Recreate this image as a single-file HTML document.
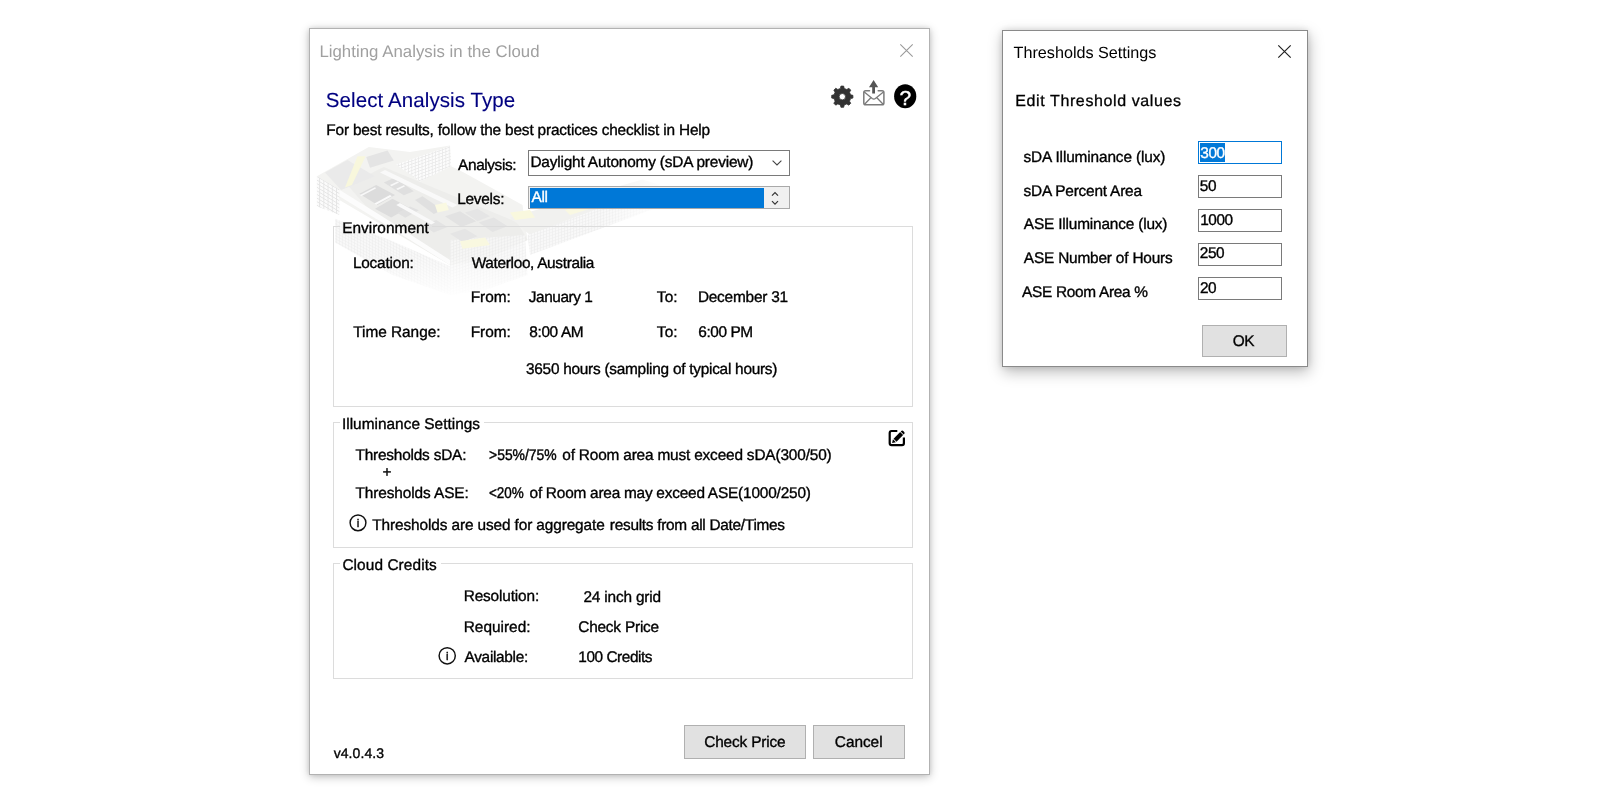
<!DOCTYPE html>
<html lang="en"><head><meta charset="utf-8"><title>Lighting Analysis in the Cloud</title>
<style>
html,body{margin:0;padding:0;background:#fff;}
body{width:1600px;height:800px;position:relative;overflow:hidden;font-family:"Liberation Sans",sans-serif;color:#000;}
.t{position:absolute;white-space:nowrap;line-height:1;text-rendering:geometricPrecision;-webkit-text-stroke:0.35px;}
.abs{position:absolute;box-sizing:border-box;}
.dlg{position:absolute;box-sizing:border-box;background:#fff;}
.grp{position:absolute;box-sizing:border-box;border:1px solid #dcdcdc;}
.btn{position:absolute;box-sizing:border-box;background:#e1e1e1;border:1px solid #b0b0b0;}
.inp{position:absolute;box-sizing:border-box;background:#fff;border:1px solid #7a7a7a;}
.leg{position:absolute;background:#fff;height:5px;}
svg{position:absolute;overflow:visible;}
#stage{position:absolute;left:0;top:0;width:1600px;height:800px;will-change:transform;}
</style></head><body>
<div id="stage">
<div class="dlg" style="left:309px;top:28px;width:621px;height:747px;border:1px solid #b2b2b2;box-shadow:0 0 5px rgba(0,0,0,0.10),0 2px 9px rgba(0,0,0,0.24);"></div>
<svg style="left:0;top:0" width="1600" height="800" viewBox="0 0 1600 800">
<defs>
<pattern id="gridA" width="4.2" height="3.6" patternUnits="userSpaceOnUse" patternTransform="skewY(31)"><rect width="4.2" height="3.6" fill="#e4e4e4"/><rect x="0.9" y="0.9" width="3.3" height="2.7" fill="#fbfbfb"/></pattern>
<pattern id="gridB" width="3.4" height="3.2" patternUnits="userSpaceOnUse" patternTransform="skewY(-20)"><rect width="3.4" height="3.2" fill="#e9e9e9"/><rect x="0.8" y="0.8" width="2.6" height="2.4" fill="#fcfcfc"/></pattern>
<pattern id="gridC" width="3" height="3" patternUnits="userSpaceOnUse" patternTransform="skewY(28)"><rect width="3" height="3" fill="#f7f7f7"/><path d="M0 0H3M0 0V3" stroke="#e9e9e9" stroke-width="0.9"/></pattern>
<pattern id="gridD" width="3" height="3" patternUnits="userSpaceOnUse" patternTransform="skewY(-18)"><rect width="3" height="3" fill="#f8f8f8"/><path d="M0 0H3M0 0V3" stroke="#eaeaea" stroke-width="0.9"/></pattern>
<linearGradient id="fadeR" x1="0" x2="1" y1="0" y2="0"><stop offset="0" stop-color="#fff" stop-opacity="0"/><stop offset="1" stop-color="#fff" stop-opacity="1"/></linearGradient>
<linearGradient id="fadeB" x1="0" x2="0" y1="0" y2="1"><stop offset="0" stop-color="#fff" stop-opacity="0"/><stop offset="1" stop-color="#fff" stop-opacity="1"/></linearGradient>
<filter id="bblur" x="-5%" y="-5%" width="110%" height="110%"><feGaussianBlur stdDeviation="0.45"/></filter>
</defs>
<g filter="url(#bblur)">
<polygon points="316.9,176.2 368.8,146.9 410.0,151.9 450.0,145.6 451.2,166.2 463.8,172.5 522.5,205.0 527.5,240.0 485.0,260.0 450.0,265.0 339.4,200.0" fill="#f3f3f1" />
<polygon points="347.5,185.0 383.8,166.9 420.0,181.9 517.5,222.5 527.5,240.0 485.0,260.0 450.0,265.0 380.0,222.5" fill="#ededeb" />
<polygon points="510.0,217.5 642.5,179.5 660.0,185.0 530.0,235.0" fill="#f1f1ef" />
<polygon points="316.9,176.2 339.4,189.4 339.4,215.0 316.9,206.2" fill="url(#gridA)" />
<polygon points="396.2,164.4 450.0,146.0 451.2,166.2 420.0,181.5" fill="url(#gridB)" />
<polygon points="335.0,218.8 392.5,241.2 450.0,266.2 450.0,295.0 392.5,275.0 335.0,242.5" fill="url(#gridC)" opacity="0.85"/>
<polygon points="450.0,240.0 525.0,235.0 527.5,275.0 485.0,290.0 450.0,295.0" fill="url(#gridD)" opacity="0.8"/>
<polygon points="527.5,235.0 657.5,186.2 657.5,207.5 530.0,255.0" fill="url(#gridD)" opacity="0.9"/>
<polygon points="339.4,189.8 380.0,215.0 450.0,260.0 450.0,265.0 380.0,221.2 339.4,196.2" fill="#fcfcfc" />
<polygon points="366.2,156.9 387.5,150.6 393.8,160.6 370.0,167.8" fill="#e4e4e4" />
<polygon points="325.0,172.5 347.5,160.0 375.0,176.2 341.2,190.0" fill="#eaeaea" />
<polygon points="359.4,193.8 376.2,185.0 395.0,195.0 377.5,205.0" fill="#dcdcdc" />
<polygon points="375.0,208.8 392.5,198.8 408.8,207.5 391.2,217.5" fill="#dddddd" />
<polygon points="383.8,182.5 395.0,177.5 413.8,191.2 403.8,195.2" fill="#dfdfdf" />
<polygon points="415.0,200.0 422.5,196.2 442.5,210.0 433.8,214.0" fill="#e0e0e0" />
<polygon points="397.5,213.1 410.0,206.5 418.8,210.2 405.2,217.8" fill="#e1e1e1" />
<polygon points="445.0,216.2 460.0,211.2 476.2,221.2 461.2,226.9" fill="#e2e2e2" />
<polygon points="465.0,212.5 477.5,208.8 490.0,216.2 477.5,221.2" fill="#e5e5e5" />
<polygon points="478.8,222.5 493.8,217.5 507.5,226.2 492.5,231.9" fill="#e4e4e4" />
<polygon points="422.5,225.0 436.2,220.0 447.5,226.9 433.8,232.5" fill="#e3e3e3" />
<polygon points="450.0,233.8 465.0,228.8 477.5,236.2 462.5,241.9" fill="#e5e5e5" />
<polygon points="374.4,203.5 390.0,195.0 391.9,196.2 376.2,204.8" fill="#fafafa" />
<polygon points="360.0,195.0 375.0,187.2 376.2,188.2 361.2,196.2" fill="#f8f8f8" />
<polygon points="390.0,185.0 397.5,181.5 399.0,182.5 391.5,186.2" fill="#f8f8f8" />
<polygon points="396.2,188.8 403.8,185.2 405.2,186.2 397.8,190.0" fill="#f8f8f8" />
<polygon points="380.0,172.5 385.0,170.0 457.5,205.0 452.5,207.5" fill="#f9f9f9" />
<polygon points="396.2,205.0 400.0,203.1 435.0,222.5 431.2,224.4" fill="#f9f9f9" />
<polygon points="357.5,156.2 365.6,156.2 351.9,185.0 345.0,187.5" fill="#f8f7dc" />
<polygon points="435.0,205.0 446.2,202.5 448.8,210.0 437.5,212.5" fill="#faf9e2" />
<polygon points="460.0,241.2 485.0,237.5 490.0,245.0 462.5,248.8" fill="#f9f8e0" />
<polygon points="510.0,212.5 530.0,210.0 535.0,217.5 515.0,220.0" fill="#f9f8de" />
<polygon points="565.0,210.0 635.0,188.8 637.5,193.8 570.0,215.0" fill="#f9f8e2" />
</g>
<rect x="600" y="170" width="65" height="90" fill="url(#fadeR)"/>
<rect x="312" y="255" width="260" height="45" fill="url(#fadeB)"/>
</svg>

<div class="t" style="left:319.40px;top:43.68px;font-size:16.8px;letter-spacing:0.030px;color:#a0a0a0;-webkit-text-stroke:0;">Lighting Analysis in the Cloud</div>
<svg style="left:900px;top:43.5px" width="13" height="13" viewBox="0 0 13 13"><path d="M0.3 0.3 L12.7 12.7 M12.7 0.3 L0.3 12.7" stroke="#9a9a9a" stroke-width="1.1" fill="none"/></svg>
<div class="t" style="left:325.77px;top:90.55px;font-size:20.5px;letter-spacing:0.096px;color:#000080;-webkit-text-stroke:0.12px;">Select Analysis Type</div>
<div class="t" style="left:326.30px;top:122.96px;font-size:15.4px;letter-spacing:-0.176px;">For best results, follow the best practices checklist in Help</div>
<svg style="left:0;top:0" width="1600" height="800" viewBox="0 0 1600 800">
<path d="M840.40 88.42 L840.94 86.09 L843.66 86.09 L844.20 88.42 L846.81 89.50 L848.84 88.23 L850.77 90.16 L849.50 92.19 L850.58 94.80 L852.91 95.34 L852.91 98.06 L850.58 98.60 L849.50 101.21 L850.77 103.24 L848.84 105.17 L846.81 103.90 L844.20 104.98 L843.66 107.31 L840.94 107.31 L840.40 104.98 L837.79 103.90 L835.76 105.17 L833.83 103.24 L835.10 101.21 L834.02 98.60 L831.69 98.06 L831.69 95.34 L834.02 94.80 L835.10 92.19 L833.83 90.16 L835.76 88.23 L837.79 89.50 Z M845.50 96.70 A3.2 3.2 0 1 0 839.10 96.70 A3.2 3.2 0 1 0 845.50 96.70 Z" fill="#333" fill-rule="evenodd" stroke="#333" stroke-width="0.8" stroke-linejoin="round"/>
<g fill="none" stroke="#7b7b7b" stroke-width="1.5" stroke-linejoin="round" stroke-linecap="round"><path d="M869.5 90.8 H865.6 Q863.8 90.8 863.8 92.6 V102.9 Q863.8 104.7 865.6 104.7 H882.1 Q883.9 104.7 883.9 102.9 V92.6 Q883.9 90.8 882.1 90.8 H878.2"/><path d="M864.6 92.2 L872.2 98.6 Q873.8 99.8 875.4 98.6 L883.1 92.2" stroke-width="1.3"/><path d="M864.8 104 L870.6 98 M882.9 104 L877.1 98" stroke-width="1.3"/></g>
<path d="M873.6 80 L878.2 87.3 H875 V93.6 H872.2 V87.3 H869 Z" fill="#555"/>
<ellipse cx="905.2" cy="96.2" rx="11.1" ry="12" fill="#000"/>
<text x="905.3" y="104.6" font-family="Liberation Sans, sans-serif" font-size="21" fill="#fff" stroke="#fff" stroke-width="0.4" text-anchor="middle">?</text>
</svg>

<div class="t" style="left:458.10px;top:158.46px;font-size:15.4px;letter-spacing:-0.395px;">Analysis:</div>
<div class="inp" style="left:528px;top:150px;width:262px;height:26px;"></div>
<div class="t" style="left:530.41px;top:154.96px;font-size:15.4px;letter-spacing:-0.180px;">Daylight Autonomy (sDA preview)</div>
<svg style="left:771px;top:159px" width="12" height="8" viewBox="0 0 12 8"><path d="M1.6 1.6 L6 5.9 L10.4 1.6" stroke="#444" stroke-width="1.1" fill="none"/></svg>
<div class="t" style="left:457.13px;top:192.46px;font-size:15.4px;letter-spacing:-0.248px;">Levels:</div>
<div class="inp" style="left:528px;top:186px;width:262px;height:23px;background:#f0f0f0;border-color:#a9a9a9;"></div>
<div class="abs" style="left:529.5px;top:187.5px;width:234.5px;height:20.3px;background:#0078d7;"></div>
<div class="t" style="left:531.55px;top:190.46px;font-size:15.4px;letter-spacing:-0.400px;color:#fff;">All</div>
<svg style="left:770px;top:190px" width="10" height="16" viewBox="0 0 10 16"><path d="M2 5.6 L5 2.6 L8 5.6 M2 11.2 L5 14.2 L8 11.2" stroke="#333" stroke-width="1.2" fill="none"/></svg>
<div class="abs" style="left:333px;top:226px;width:580px;height:181px;border:1px solid #dcdcdc;border-top:0;"></div><div class="abs" style="left:333px;top:226px;width:7px;height:1px;background:#dcdcdc;"></div><div class="abs" style="left:432px;top:226px;width:481px;height:1px;background:#dcdcdc;"></div>
<div class="t" style="left:342.13px;top:221.21px;font-size:15.4px;letter-spacing:0.033px;">Environment</div>
<div class="t" style="left:352.88px;top:256.46px;font-size:15.4px;letter-spacing:-0.193px;">Location:</div>
<div class="t" style="left:471.75px;top:256.46px;font-size:15.4px;letter-spacing:-0.331px;">Waterloo, Australia</div>
<div class="t" style="left:470.69px;top:289.96px;font-size:15.4px;letter-spacing:-0.018px;">From:</div>
<div class="t" style="left:528.83px;top:289.96px;font-size:15.4px;letter-spacing:-0.450px;">January 1</div>
<div class="t" style="left:656.84px;top:289.96px;font-size:15.4px;letter-spacing:0.139px;">To:</div>
<div class="t" style="left:697.88px;top:289.96px;font-size:15.4px;letter-spacing:-0.213px;">December 31</div>
<div class="t" style="left:353.34px;top:324.96px;font-size:15.4px;letter-spacing:-0.042px;">Time Range:</div>
<div class="t" style="left:470.69px;top:324.96px;font-size:15.4px;letter-spacing:-0.018px;">From:</div>
<div class="t" style="left:529.31px;top:324.96px;font-size:15.4px;letter-spacing:-0.356px;">8:00 AM</div>
<div class="t" style="left:656.84px;top:324.96px;font-size:15.4px;letter-spacing:0.139px;">To:</div>
<div class="t" style="left:698.35px;top:324.96px;font-size:15.4px;letter-spacing:-0.428px;">6:00 PM</div>
<div class="t" style="left:525.97px;top:361.71px;font-size:15.4px;letter-spacing:-0.256px;">3650 hours (sampling of typical hours)</div>
<div class="abs" style="left:333px;top:422px;width:580px;height:126px;border:1px solid #dcdcdc;border-top:0;"></div><div class="abs" style="left:333px;top:422px;width:7px;height:1px;background:#dcdcdc;"></div><div class="abs" style="left:484px;top:422px;width:429px;height:1px;background:#dcdcdc;"></div>
<div class="t" style="left:341.94px;top:416.71px;font-size:15.4px;letter-spacing:0.019px;">Illuminance Settings</div>
<div class="t" style="left:355.49px;top:448.46px;font-size:15.4px;letter-spacing:-0.201px;">Thresholds sDA:</div>
<div class="t" style="left:488.77px;top:448.46px;font-size:15.4px;transform-origin:0 0;transform:scaleX(0.9047);-webkit-text-stroke:0.42px;">&gt;55%/75%</div>
<div class="t" style="left:562.27px;top:448.46px;font-size:15.4px;letter-spacing:-0.153px;word-spacing:-0.127px;">of Room area must exceed sDA(300/50)</div>
<div class="t" style="left:382.56px;top:465.06px;font-size:15.4px;">+</div>
<div class="t" style="left:355.49px;top:486.46px;font-size:15.4px;letter-spacing:-0.096px;">Thresholds ASE:</div>
<div class="t" style="left:489.25px;top:486.46px;font-size:15.4px;transform-origin:0 0;transform:scaleX(0.875);-webkit-text-stroke:0.42px;">&lt;20%</div>
<div class="t" style="left:529.60px;top:486.46px;font-size:15.4px;letter-spacing:-0.173px;word-spacing:-0.312px;">of Room area may exceed ASE(1000/250)</div>
<svg style="left:349.1px;top:514.3px" width="18" height="18" viewBox="0 0 18 18"><circle cx="9" cy="8.8" r="7.9" fill="none" stroke="#111" stroke-width="1.45"/><text x="9.05" y="13.1" font-family="Liberation Sans, sans-serif" font-size="11.6" text-anchor="middle" fill="#111" stroke="#111" stroke-width="0.45">i</text></svg>
<div class="t" style="left:372.34px;top:518.46px;font-size:15.4px;letter-spacing:-0.118px;">Thresholds are used for aggregate</div>
<div class="t" style="left:609.85px;top:518.46px;font-size:15.4px;letter-spacing:-0.279px;">results from all Date/Times</div>
<svg style="left:0;top:0" width="1600" height="800" viewBox="0 0 1600 800">
<path d="M897.3 431 H891.6 Q889.7 431 889.7 432.9 V443.3 Q889.7 445.2 891.6 445.2 H902 Q903.9 445.2 903.9 443.3 V437.6" fill="none" stroke="#000" stroke-width="2.2" stroke-linecap="butt" stroke-linejoin="round"/>
<g transform="translate(892.3,442.9) rotate(-45)"><path d="M-0.3 0 L3.0 -2.1 L3.0 2.1 Z" fill="#000"/><rect x="3.9" y="-2.1" width="9.3" height="4.2" fill="#000"/><path d="M14 -2.1 H14.8 Q16.2 -2.1 16.2 0 Q16.2 2.1 14.8 2.1 H14 Z" fill="#000"/></g>
</svg>

<div class="abs" style="left:333px;top:563px;width:580px;height:116px;border:1px solid #dcdcdc;border-top:0;"></div><div class="abs" style="left:333px;top:563px;width:7px;height:1px;background:#dcdcdc;"></div><div class="abs" style="left:441px;top:563px;width:472px;height:1px;background:#dcdcdc;"></div>
<div class="t" style="left:342.39px;top:557.96px;font-size:15.4px;letter-spacing:0.091px;">Cloud Credits</div>
<div class="t" style="left:463.69px;top:588.71px;font-size:15.4px;letter-spacing:-0.150px;">Resolution:</div>
<div class="t" style="left:583.46px;top:590.46px;font-size:15.4px;letter-spacing:-0.183px;">24 inch grid</div>
<div class="t" style="left:463.69px;top:619.71px;font-size:15.4px;letter-spacing:0.015px;">Required:</div>
<div class="t" style="left:578.22px;top:619.71px;font-size:15.4px;letter-spacing:-0.201px;">Check Price</div>
<svg style="left:438px;top:647px" width="18" height="18" viewBox="0 0 18 18"><circle cx="9.2" cy="8.8" r="8.1" fill="none" stroke="#111" stroke-width="1.45"/><text x="9.25" y="13.1" font-family="Liberation Sans, sans-serif" font-size="11.6" text-anchor="middle" fill="#111" stroke="#111" stroke-width="0.45">i</text></svg>
<div class="t" style="left:464.55px;top:649.96px;font-size:15.4px;letter-spacing:-0.304px;">Available:</div>
<div class="t" style="left:578.29px;top:649.96px;font-size:15.4px;letter-spacing:-0.450px;">100 Credits</div>
<div class="t" style="left:333.65px;top:746.25px;font-size:14px;letter-spacing:0.099px;">v4.0.4.3</div>
<div class="btn" style="left:684px;top:725px;width:122px;height:34px;"></div>
<div class="t" style="left:704.27px;top:735.21px;font-size:15.4px;letter-spacing:-0.160px;">Check Price</div>
<div class="btn" style="left:813px;top:725px;width:92px;height:34px;"></div>
<div class="t" style="left:834.84px;top:735.21px;font-size:15.4px;letter-spacing:-0.038px;">Cancel</div>
<div class="dlg" style="left:1002px;top:30px;width:306px;height:337px;border:1px solid #8a8a8a;box-shadow:0 0 7px rgba(0,0,0,0.13),1px 5px 14px rgba(0,0,0,0.27);"></div>
<div class="t" style="left:1013.62px;top:44.79px;font-size:16.2px;letter-spacing:-0.015px;-webkit-text-stroke:0;">Thresholds Settings</div>
<svg style="left:1278px;top:45px" width="13" height="13" viewBox="0 0 13 13"><path d="M0.3 0.3 L12.7 12.7 M12.7 0.3 L0.3 12.7" stroke="#222" stroke-width="1.2" fill="none"/></svg>
<div class="t" style="left:1015.27px;top:93.71px;font-size:16px;letter-spacing:0.610px;-webkit-text-stroke:0.3px;">Edit Threshold values</div>
<div class="t" style="left:1023.51px;top:149.56px;font-size:15.4px;letter-spacing:-0.134px;">sDA Illuminance (lux)</div>
<div class="inp" style="left:1198px;top:141px;width:84px;height:23px;border-color:#0078d7;"></div>
<div class="abs" style="left:1199.5px;top:143px;width:25.5px;height:18.6px;background:#0078d7;"></div>
<div class="t" style="left:1200.31px;top:145.56px;font-size:15.4px;letter-spacing:-0.450px;color:#fff;">300</div>
<div class="t" style="left:1023.51px;top:183.56px;font-size:15.4px;letter-spacing:-0.200px;">sDA Percent Area</div>
<div class="inp" style="left:1198px;top:175px;width:84px;height:23px;"></div>
<div class="t" style="left:1199.83px;top:178.56px;font-size:15.4px;letter-spacing:-0.450px;">50</div>
<div class="t" style="left:1023.82px;top:217.36px;font-size:15.4px;letter-spacing:-0.172px;">ASE Illuminance (lux)</div>
<div class="inp" style="left:1198px;top:209px;width:84px;height:23px;"></div>
<div class="t" style="left:1200.16px;top:212.96px;font-size:15.4px;letter-spacing:-0.450px;">1000</div>
<div class="t" style="left:1023.82px;top:251.36px;font-size:15.4px;letter-spacing:-0.187px;">ASE Number of Hours</div>
<div class="inp" style="left:1198px;top:243px;width:84px;height:23px;"></div>
<div class="t" style="left:1199.79px;top:246.36px;font-size:15.4px;letter-spacing:-0.450px;">250</div>
<div class="t" style="left:1022.10px;top:284.96px;font-size:15.4px;letter-spacing:-0.290px;">ASE Room Area %</div>
<div class="inp" style="left:1198px;top:277px;width:84px;height:23px;"></div>
<div class="t" style="left:1199.89px;top:280.56px;font-size:15.4px;letter-spacing:-0.450px;">20</div>
<div class="btn" style="left:1202px;top:325px;width:85px;height:32px;"></div>
<div class="t" style="left:1232.71px;top:333.56px;font-size:15.4px;letter-spacing:-0.450px;">OK</div>
</div>
</body></html>
